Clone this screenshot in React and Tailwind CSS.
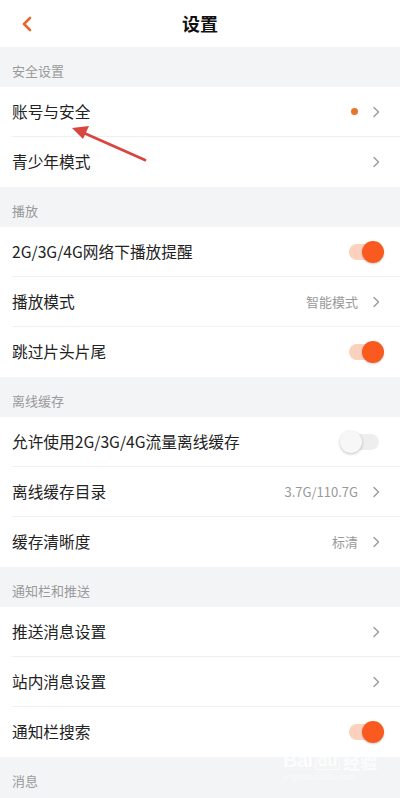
import React from 'react';

const font = { fontFamily: '"Noto Sans CJK SC", "Noto Sans", sans-serif' };

const Chevron = () => (
  <svg width="8" height="12" viewBox="0 0 8 12" className="ml-[14px]">
    <path d="M2 1.5 L6.5 6 L2 10.5" fill="none" stroke="#9a9a9a" strokeWidth="1.4" strokeLinecap="round" strokeLinejoin="round" />
  </svg>
);

const Switch = ({ on }) => (
  <div className="relative w-[36px] h-[24px] flex items-center mr-[-1px]">
    <div className={`w-[30px] h-[16px] rounded-full ml-[4px] ${on ? 'bg-[#fbd0bd]' : 'bg-[#eeeeee]'}`} />
    {on ? (
      <div className="absolute right-[-3px] top-[1px] w-[22px] h-[22px] rounded-full bg-[#fa5a1f] shadow-[0_1px_2px_rgba(0,0,0,0.2)]" />
    ) : (
      <div className="absolute left-[-5px] top-[1px] w-[22px] h-[22px] rounded-full bg-[#f7f7f7] shadow-[0_1px_3px_rgba(0,0,0,0.25)]" />
    )}
  </div>
);

const Section = ({ title }) => (
  <div className="h-[40px] bg-[#f3f4f6] flex items-center pt-[7px] px-3 text-[13px] text-[#9a9a9a]">{title}</div>
);

const Row = ({ label, value, dot, toggle, last }) => (
  <div className="h-[50px] bg-white pl-3 flex">
    <div className={`flex-1 flex items-center pr-[20px] ${last ? '' : 'border-b border-[#f0f0f0]'}`}>
      <span className="flex-1 text-[15.7px] text-[#222]">{label}</span>
      {dot && <span className="w-[7px] h-[7px] rounded-full bg-[#e8742a]" />}
      {value && <span className="text-[13px] text-[#999]">{value}</span>}
      {toggle !== undefined ? <Switch on={toggle} /> : <Chevron />}
    </div>
  </div>
);

export default function App() {
  return (
    <div className="relative w-[400px] h-[798px] overflow-hidden bg-[#f3f4f6]" style={font}>
      <div className="h-[47px] bg-white flex items-center relative">
        <svg width="12" height="16" viewBox="0 0 12 16" className="absolute left-[21px] top-[16px]">
          <path d="M9 2 L3 8 L9 14" fill="none" stroke="#e2692f" strokeWidth="2.6" strokeLinecap="round" strokeLinejoin="round" />
        </svg>
        <div className="flex-1 text-center text-[18px] font-bold text-[#111]">设置</div>
      </div>

      <Section title="安全设置" />
      <Row label="账号与安全" dot />
      <Row label="青少年模式" last />

      <Section title="播放" />
      <Row label="2G/3G/4G网络下播放提醒" toggle={true} />
      <Row label="播放模式" value="智能模式" />
      <Row label="跳过片头片尾" toggle={true} last />

      <Section title="离线缓存" />
      <Row label="允许使用2G/3G/4G流量离线缓存" toggle={false} />
      <Row label="离线缓存目录" value="3.7G/110.7G" />
      <Row label="缓存清晰度" value="标清" last />

      <Section title="通知栏和推送" />
      <Row label="推送消息设置" />
      <Row label="站内消息设置" />
      <Row label="通知栏搜索" toggle={true} last />

      <Section title="消息" />

      {/* annotation arrow */}
      <svg className="absolute left-0 top-0 pointer-events-none" width="400" height="200">
        <line x1="145" y1="160" x2="84" y2="133" stroke="#d9453f" strokeWidth="2.8" strokeLinecap="round" />
        <path d="M72 128 L89 126 L83 139 Z" fill="#d9453f" />
      </svg>

      {/* watermark */}
      <div className="absolute left-[283px] top-[750px] text-white opacity-80 pointer-events-none">
        <div className="flex items-end">
          <span className="text-[20px] font-bold leading-none tracking-tight" style={{ fontFamily: '"Liberation Sans", sans-serif' }}>Bai</span>
          <span className="text-[16px] font-bold leading-none border border-white rounded-t-full px-[2px] ml-[2px]" style={{ fontFamily: '"Liberation Sans", sans-serif' }}>du</span>
          <span className="text-[17px] font-bold leading-none ml-[3px]">经验</span>
        </div>
        <div className="text-[9px] leading-none mt-[3px] opacity-80" style={{ fontFamily: '"Liberation Sans", sans-serif' }}>jingyan.baidu.com</div>
      </div>
    </div>
  );
}
